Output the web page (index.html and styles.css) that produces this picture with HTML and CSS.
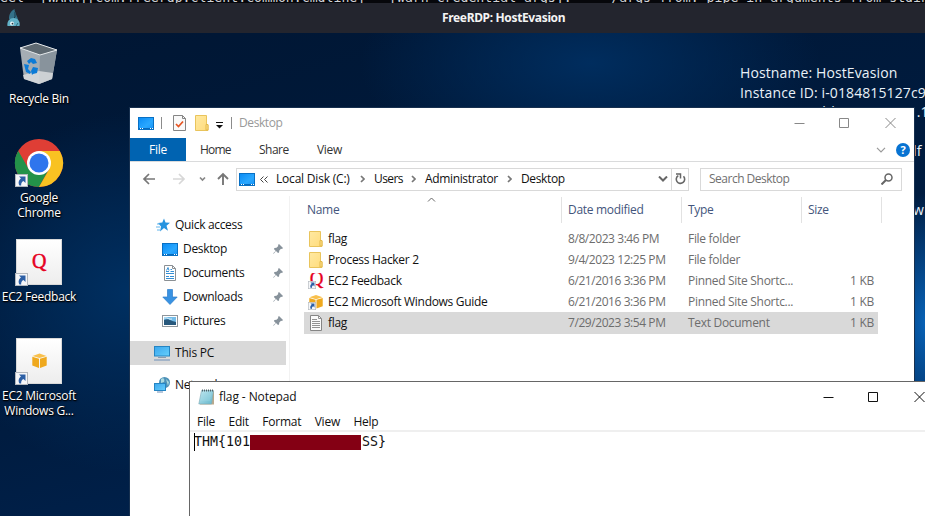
FILE: index.html
```html
<!DOCTYPE html>
<html lang="en">
<head>
<meta charset="utf-8">
<title>FreeRDP: HostEvasion</title>
<link rel="stylesheet" href="styles.css">
</head>
<body>
<svg class="defs" width="0" height="0" aria-hidden="true">
  <defs>
    <linearGradient id="blue" x2="1" y2="1"><stop stop-color="#0a8bf4"/><stop offset=".6" stop-color="#2aa8ff"/><stop offset="1" stop-color="#1792f5"/></linearGradient>
    <linearGradient id="screen" x2="1" y2="1"><stop stop-color="#3aa6ee"/><stop offset="1" stop-color="#66cffb"/></linearGradient>
    <linearGradient id="fold" x2="1" y2="1"><stop stop-color="#ffe9a2"/><stop offset="1" stop-color="#ffdc7c"/></linearGradient>
    <linearGradient id="tile" x2="0" y2="1"><stop stop-color="#fff"/><stop offset="1" stop-color="#ededed"/></linearGradient>
    <linearGradient id="pad" x2="1" y2="1"><stop stop-color="#c5eaf2"/><stop offset="1" stop-color="#62b6cb"/></linearGradient>
    <symbol id="desk" viewBox="0 0 16 13"><rect x=".5" y=".5" width="15" height="12" fill="url(#blue)" stroke="#0870c4"/><path d="M1 11.5h14" stroke="#076bbd"/><path d="M2 11.5h1M4 11.5h1M12 11.5h1M14 11.5h1" stroke="#fff"/></symbol>
    <symbol id="folder" viewBox="0 0 14 16"><path d="M.5.5h11v9.500h1.500v5.500H.5z" fill="url(#fold)" stroke="#e9c45c"/><path d="M11 15V9.500h2V15z" fill="#ffe08a" stroke="#e3b94a"/></symbol>
    <symbol id="pin" viewBox="0 0 10 10"><path d="M6 0l4 4-1 1-1-.3L6.300 6.500 6 8.500l-1 .6-2-2L.7 9.800.2 9.300 2.700 6.900.9 5l.6-1 2-.2L5.300 2 5 1z" fill="#87929b"/></symbol>
    <symbol id="short" viewBox="0 0 13 13"><rect x=".5" y=".5" width="12" height="12" fill="#f5f6f8" stroke="#b2b7bd"/><path d="M4 2.500h6.500V9L8.500 7C6.500 8 6 9.500 6.200 11.500H4.500C2.700 8.500 4 6 6 4.500z" fill="#2c5fa5"/></symbol>
    <symbol id="box" viewBox="0 0 15 15"><path d="M.5 3L7.500.5l7 2.500-7 2z" fill="#f9c04c"/><path d="M.3 3.700L7 5.700V15L.3 12.500zM8 5.700l6.700-2v8.800L8 15z" fill="#efa91e"/></symbol>
    <symbol id="sep" viewBox="0 0 5 8"><path d="M1 1l3 3-3 3" fill="none" stroke="#777" stroke-width="1.700"/></symbol>
  </defs>
</svg>

<div class="screen">
  <div class="terminal"><span>eel&nbsp; [WARN][com.freerdp.client.common.cmdline] - [warn_credential_args]:&nbsp;&nbsp; - /args-from: pipe in arguments from stdin</span></div>
  <header class="rdp-bar">
    <svg class="rdp-logo" width="13" height="18" viewBox="0 0 13 18"><path d="M7.500 0C4.500 1.500 1.800 5 2 10l9 1C11 8 8.500 6 9 4c-1-1-1.500-2-1.500-4z" fill="#34728a"/><path d="M8 3v5l-1 1" stroke="#17394b" fill="none"/><path d="M.5 17c-.8-4 1.500-8 6-8s7 4 6 8z" fill="#62b2c8"/><circle cx="5" cy="14.500" r="2" fill="#e9f5f8"/><circle cx="5.500" cy="14.700" r=".9" fill="#203944"/><path d="M9 17l2-3" stroke="#2b6c80"/></svg>
    <span class="rdp-title">FreeRDP: HostEvasion</span>
  </header>

  <main class="desktop">
    <div class="icons">
      <div class="shortcut bin">
        <svg width="40" height="44" viewBox="0 0 40 44"><path d="M1 6L17 1l21 7-5 29-13 5L5 37z" fill="#a5adb4"/><path d="M1 6L17 1l21 7-17 5z" fill="#5e6971"/><path d="M21 13L38 8l-5 29-13 5z" fill="#88939c"/><path d="M4 33l16-4 14 2-1 6-13 5-15-5z" fill="#d9dcde" opacity=".85"/><path d="M1 6L17 1l21 7-17 5z" fill="none" stroke="#e3e7e9"/><g fill="#0d7bd6"><path d="M8 19l4-3 4 1 2 4-4 1-2-2-2 2z"/><path d="M5 22l5 1-1 4 3 3-1 2-4-2z"/><path d="M13 27l1-2 5 1-1 5-4 1-1 1-1-4z"/></g></svg>
        <span>Recycle Bin</span>
      </div>
      <div class="shortcut chrome">
        <svg width="50" height="50" viewBox="0 0 50 50"><circle cx="25" cy="25" r="24" fill="#df3e35"/><path d="M4.200 13A24 24 0 0 0 25 49l10-18H14.600z" fill="#239249"/><path d="M25 13h20.800A24 24 0 0 1 25 49l10.400-18z" fill="#f9c222"/><path d="M4.200 13l10.400 18L25 25V13z" fill="#df3e35"/><path d="M4.200 13A24 24 0 0 0 2 31h12.600z" fill="#239249"/><circle cx="25" cy="25" r="12" fill="#fff"/><circle cx="25" cy="25" r="9.500" fill="#2f75ed"/><use href="#short" x="1" y="36" width="13" height="13"/></svg>
        <span>Google<br>Chrome</span>
      </div>
      <div class="shortcut feedback">
        <svg width="48" height="48" viewBox="0 0 48 48"><rect x="1.500" y="1.500" width="45" height="45" fill="url(#tile)" stroke="#d9d9d9"/><text class="q-large" x="24" y="29.500" text-anchor="middle">Q</text><use href="#short" y="35" width="13" height="13"/></svg>
        <span>EC2 Feedback</span>
      </div>
      <div class="shortcut guide">
        <svg width="48" height="48" viewBox="0 0 48 48"><rect x="1.500" y="1.500" width="45" height="45" fill="url(#tile)" stroke="#d9d9d9"/><use href="#box" x="17" y="16" width="15" height="15"/><use href="#short" y="35" width="13" height="13"/></svg>
        <span>EC2 Microsoft<br>Windows G...</span>
      </div>
    </div>

    <div class="host-info">
      <p>Hostname: HostEvasion</p>
      <p>Instance ID: i-0184815127c9</p>
      <p class="address">Private IP Address: 10.201.1</p>
      <p></p>
      <p class="edge">lf</p>
      <p></p>
      <p></p>
      <p class="edge">w</p>
    </div>

    <section class="explorer">
      <div class="titlebar">
        <svg class="t-desk" width="16" height="13"><use href="#desk"/></svg>
        <i class="rule"></i>
        <svg class="t-check" width="13" height="16" viewBox="0 0 13 16"><path d="M.5.5h9l3 3v12H.5z" fill="#f9f9f9" stroke="#858585"/><path d="M9.500.5v3h3" fill="none" stroke="#858585"/><path d="M3 9l2.500 2.500L10 6.500" fill="none" stroke="#e65422" stroke-width="1.700"/></svg>
        <svg class="t-folder" width="14" height="16"><use href="#folder"/></svg>
        <svg class="t-more" width="7" height="7" viewBox="0 0 7 7"><path d="M0 .5h7" stroke="#111"/><path d="M0 3h7L3.500 6.500z" fill="#111"/></svg>
        <i class="rule"></i>
        <span class="t-name">Desktop</span>
        <svg class="controls" width="104" height="12" viewBox="0 0 104 12"><path d="M.5 6.500h10M45.500 1.500h9v9h-9zM91.500 1l10 10m0-10l-10 10" fill="none" stroke="#888"/></svg>
      </div>
      <div class="ribbon">
        <span class="file">File</span><span class="home">Home</span><span class="share">Share</span><span class="view">View</span>
        <svg class="expand" width="10" height="6" viewBox="0 0 10 6"><path d="M1 .8l4 4 4-4" fill="none" stroke="#999" stroke-width="1.200"/></svg>
        <b class="help">?</b>
      </div>
      <div class="navigation">
        <svg class="arrows" width="90" height="14" viewBox="0 0 90 14"><path d="M13 7H2M7 2L2 7l5 5" fill="none" stroke="#777" stroke-width="1.700"/><path d="M31 7h11M37 2l5 5-5 5" fill="none" stroke="#d7d7d7" stroke-width="1.700"/><path d="M58 5.500l2.500 2.500L63 5.500" fill="none" stroke="#888" stroke-width="1.700"/><path d="M81 13V2M76 7l5-5 5 5" fill="none" stroke="#777" stroke-width="1.900"/></svg>
        <div class="path">
          <svg width="16" height="13"><use href="#desk"/></svg>
          <svg class="dbl" width="8" height="7" viewBox="0 0 8 7"><path d="M3.500.5l-3 3 3 3M7.500.5l-3 3 3 3" fill="none" stroke="#444"/></svg>
          <span class="p1">Local Disk (C:)</span><svg class="sep" width="5" height="8"><use href="#sep"/></svg><span class="p2">Users</span><svg class="sep" width="5" height="8"><use href="#sep"/></svg><span class="p3">Administrator</span><svg class="sep" width="5" height="8"><use href="#sep"/></svg><span class="p4">Desktop</span>
          <svg class="drop" width="10" height="6" viewBox="0 0 10 6"><path d="M1 .5l4 4 4-4" fill="none" stroke="#666" stroke-width="2"/></svg>
          <div class="reload"><svg width="11" height="12" viewBox="0 0 11 12"><path d="M3.300 2.600A4.200 4.200 0 1 0 8.500 3.300" fill="none" stroke="#666" stroke-width="1.600"/><path d="M1 1h4.500v4.500" fill="none" stroke="#666" stroke-width="1.500"/></svg></div>
        </div>
        <div class="search"><span>Search Desktop</span><svg width="12" height="12" viewBox="0 0 12 12"><circle cx="7.500" cy="4.500" r="3.500" fill="none" stroke="#666" stroke-width="1.500"/><path d="M5 7l-4.500 4.500" stroke="#666" stroke-width="2"/></svg></div>
      </div>
      <div class="content">
        <nav class="tree">
          <div class="node top"><svg width="14" height="14" viewBox="0 0 14 14"><path d="M8 .5l1.500 4 4.500.2-3.500 3 1.500 5L8 10l-4 3.500 1-5-3-3.500 4.300-.4z" fill="#2693df"/><path d="M1 6h3M0 9h4M1 12h3" stroke="#64b6ec"/></svg><span>Quick access</span></div>
          <div class="node"><svg width="16" height="13"><use href="#desk"/></svg><span>Desktop</span><svg class="pin" width="10" height="10"><use href="#pin"/></svg></div>
          <div class="node"><svg width="16" height="16" viewBox="0 0 16 16"><path d="M2.500.5h8l3 3v12h-11z" fill="#fff" stroke="#8b9094"/><path d="M10.500.5v3h3" fill="none" stroke="#8b9094"/><path d="M4 6.500h3M8.500 4.500H10M8.500 6.500H12M4 8.500h8M4 11.500h3M8 11.500h4M4 13.500h8" stroke="#368fd4"/><path d="M4.500 5.500l1.500-3 1 3" fill="none" stroke="#368fd4"/></svg><span>Documents</span><svg class="pin" width="10" height="10"><use href="#pin"/></svg></div>
          <div class="node"><svg width="16" height="16" viewBox="0 0 16 16"><path d="M5.500.5h5V8h4.700L8 15.500.8 8h4.700z" fill="#3892e2" stroke="#2c7dca" stroke-width=".7"/></svg><span>Downloads</span><svg class="pin" width="10" height="10"><use href="#pin"/></svg></div>
          <div class="node"><svg width="16" height="12" viewBox="0 0 16 12"><rect x=".5" y=".5" width="15" height="11" fill="#fff" stroke="#8f969c"/><path d="M2 2h12v8H2z" fill="#75bde9"/><path d="M2 5c5-2 6 1 12 2v3H2z" fill="#28587c"/><path d="M2 3c4-1 5 2 8 1" stroke="#d9f1fc" fill="none"/></svg><span>Pictures</span><svg class="pin" width="10" height="10"><use href="#pin"/></svg></div>
          <div class="node top pc"><svg width="16" height="16" viewBox="0 0 16 16"><rect x=".5" y="1.500" width="15" height="9.500" fill="url(#screen)" stroke="#2585c3"/><path d="M4 12.500h8" stroke="#8c9caf"/><path d="M0 15h16" stroke="#6f8fb8"/></svg><span>This PC</span></div>
          <div class="node top net"><svg width="16" height="16" viewBox="0 0 16 16"><circle cx="10.500" cy="5.500" r="5.500" fill="#4c91b8"/><path d="M7 2c3-2 4 1 3 3L7 6zM12 2l3 3-1 4z" fill="#abd9df"/><rect x=".5" y="6.500" width="11" height="7" fill="url(#screen)" stroke="#2585c3"/><path d="M3 15h6" stroke="#6f8fb8"/></svg><span>Network</span></div>
        </nav>
        <div class="files">
          <svg class="sort" width="9" height="5" viewBox="0 0 9 5"><path d="M1 4.500L4.500 1 8 4.500" fill="none" stroke="#666"/></svg>
          <div class="head"><span>Name</span><span>Date modified</span><span>Type</span><span>Size</span></div>
          <div class="row"><span class="name"><svg width="14" height="16"><use href="#folder"/></svg>flag</span><span class="date">8/8/2023 3:46 PM</span><span>File folder</span><span></span></div>
          <div class="row"><span class="name"><svg width="14" height="16"><use href="#folder"/></svg>Process Hacker 2</span><span class="date">9/4/2023 12:25 PM</span><span>File folder</span><span></span></div>
          <div class="row"><span class="name"><svg width="16" height="16" viewBox="0 0 16 16"><text class="q-small" x="8.500" y="12" text-anchor="middle">Q</text><use href="#short" y="8" width="8" height="8"/></svg>EC2 Feedback</span><span class="date">6/21/2016 3:36 PM</span><span>Pinned Site Shortc...</span><span class="size">1 KB</span></div>
          <div class="row"><span class="name"><svg width="16" height="16" viewBox="0 0 16 16"><use href="#box" x="1" width="14" height="15"/><use href="#short" y="8" width="8" height="8"/></svg>EC2 Microsoft Windows Guide</span><span class="date">6/21/2016 3:36 PM</span><span>Pinned Site Shortc...</span><span class="size">1 KB</span></div>
          <div class="row selected"><span class="name"><svg width="14" height="16" viewBox="0 0 14 16"><path d="M1.500.5h8l3 3v12h-11z" fill="#fafafa" stroke="#858585"/><path d="M9.500.5v3h3M3 4.500h5M3 6.500h8M3 8.500h8M3 10.500h8M3 12.500h8" fill="none" stroke="#929292"/></svg>flag</span><span class="date">7/29/2023 3:54 PM</span><span>Text Document</span><span class="size">1 KB</span></div>
        </div>
      </div>
    </section>

    <section class="notepad">
      <div class="note-title">
        <svg width="17" height="17" viewBox="0 0 17 17"><path d="M4 2h12v13.500H2z" fill="#b9a98c"/><path d="M3.500 1.500h12L13.500 15H.8z" fill="url(#pad)" stroke="#7faab5" stroke-width=".6"/><path d="M3 5h10M3 7h10M2.500 9h10M2 11h10" stroke="#a6dae5" stroke-width=".6"/><path d="M4 1.500h11" stroke="#4d6269" stroke-width="2" stroke-dasharray="1 1"/></svg>
        <span>flag - Notepad</span>
        <svg class="note-controls" width="104" height="12" viewBox="0 0 104 12"><path d="M.5 6.500h10M45.500 1.500h9v9h-9zM91.500 1l10 10m0-10l-10 10" fill="none" stroke="#111"/></svg>
      </div>
      <div class="menu"><span>File</span><span>Edit</span><span>Format</span><span>View</span><span>Help</span></div>
      <div class="text"><i class="caret"></i><span>THM{101</span><i class="redaction"></i><span>SS}</span></div>
    </section>
  </main>
</div>
</body>
</html>
```
FILE: styles.css
```css
* { box-sizing: border-box; }
body { margin: 0; overflow: hidden; background: #001a3b; font: 12px/16px "Open Sans", "Noto Sans", sans-serif; letter-spacing: -.2px; color: #111; }
svg { display: block; flex: none; }
span { white-space: nowrap; }
.defs { position: absolute; }
.screen { width: 925px; height: 516px; display: flex; flex-direction: column; overflow: hidden; }
.terminal { height: 3px; flex: none; background: #06070b; color: #d0d2d6; overflow: hidden; font: 13.2px/16px "DejaVu Sans Mono", monospace; letter-spacing: 0; display: flex; align-items: flex-end; }
.terminal span { margin-bottom: -3px; }
.rdp-bar { height: 30px; flex: none; background: #23252e; display: flex; align-items: center; padding-left: 7px; color: #f4f4f4; }
.rdp-title { margin-left: 422px; font: 700 12px/16px "Noto Sans", sans-serif; letter-spacing: -.35px; }
.desktop { position: relative; flex: 1; overflow: hidden; background: radial-gradient(ellipse 45px 130px at 925px 290px, #0862b6, transparent), radial-gradient(ellipse 230px 110px at 590px 30px, #002d5e, transparent), radial-gradient(ellipse 190px 180px at 130px 260px, #003062, transparent), linear-gradient(165deg, #001633, #001c40 55%, #00275a); }
.icons { width: 78px; display: flex; flex-direction: column; color: #fff; }
.shortcut { display: flex; flex-direction: column; align-items: center; text-align: center; line-height: 15px; }
.shortcut span { text-shadow: 1px 1px 2px #000, 0 1px 1px #000; letter-spacing: -.25px; }
.bin { height: 104px; padding-top: 9px; }
.bin svg { margin-bottom: 5px; }
.chrome { height: 101px; }
.chrome svg { margin: 1px 0 2px; }
.feedback { height: 99px; }
.feedback svg, .guide svg { margin-bottom: 3px; }
.q-large { font: 20px "Liberation Serif", serif; fill: #e6001e; stroke: #e6001e; stroke-width: .5px; }
.q-small { font: 19px "Liberation Serif", serif; fill: #e6001e; stroke: #e6001e; stroke-width: .3px; }
.host-info { position: absolute; left: 740px; top: 30px; width: 185px; overflow: hidden; color: #e9f1f8; font: 14px/19.500px "Open Sans", sans-serif; letter-spacing: .11px; white-space: nowrap; }
.host-info p { margin: 0; height: 19.500px; }
.host-info .address { letter-spacing: .3px; }
.host-info .edge { padding-left: 173px; }
.explorer { position: absolute; left: 130px; top: 75px; width: 784px; height: 408px; background: #fff; box-shadow: 0 0 0 1px #17304f; }
.titlebar { height: 30px; display: flex; align-items: center; padding-left: 8px; color: #999; }
.rule { width: 1px; height: 12px; background: #8b8b8b; }
.t-desk { margin-right: 7px; }
.t-check { margin-left: 11px; }
.t-folder { margin-left: 9px; }
.t-more { margin: 4px 8px 0 7px; }
.t-name { margin-left: 7px; letter-spacing: -.4px; }
.controls { margin-left: auto; margin-right: 16px; }
.ribbon { height: 24px; display: flex; align-items: center; border-bottom: 1px solid #dadbdc; color: #333; letter-spacing: -.3px; }
.file { width: 56px; height: 23px; line-height: 23px; text-align: center; background: #0063b1; color: #fff; }
.home { margin-left: 14px; width: 59px; letter-spacing: -.8px; }
.share { width: 58px; letter-spacing: -.5px; }
.expand { margin-left: auto; margin-right: 10px; }
.help { width: 14px; height: 14px; margin-right: 4px; border-radius: 50%; background: #0873d2; color: #fff; font-size: 11px; line-height: 14px; text-align: center; }
.navigation { height: 34px; display: flex; align-items: center; padding-left: 12px; }
.path { width: 453px; height: 23px; margin-left: 4px; border: 1px solid #d9d9d9; display: flex; align-items: center; padding-left: 2px; letter-spacing: -.35px; }
.dbl { margin: 0 8px 0 5px; }
.p1 { width: 75px; letter-spacing: -.2px; }
.sep { margin: 0 9px; }
.p2 { width: 28px; letter-spacing: -.6px; }
.p3 { width: 73px; }
.drop { margin-left: auto; margin-right: 3px; }
.reload { width: 17px; height: 21px; border-left: 1px solid #d9d9d9; display: flex; align-items: center; justify-content: center; }
.search { width: 202px; height: 23px; border: 1px solid #d9d9d9; margin-left: 11px; display: flex; align-items: center; justify-content: space-between; padding: 0 8px; color: #707070; letter-spacing: -.5px; }
.content { display: flex; height: 320px; }
.tree { width: 160px; padding-top: 17px; border-right: 1px solid #f2f2f2; letter-spacing: -.33px; }
.node { width: 156px; height: 24px; display: flex; align-items: center; padding-left: 32px; padding-right: 3px; }
.node span { margin-left: 5px; }
.node .pin { margin-left: auto; margin-right: 0; }
.node.top { padding-left: 26px; }
.node.pc { padding-left: 24px; margin: 8px 0; background: #d9d9d9; letter-spacing: -.2px; }
.node.net { padding-left: 24px; }
.files { position: relative; width: 624px; }
.sort { position: absolute; left: 137px; top: 1px; }
.head { display: grid; grid-template-columns: 258px 120px 120px 80px; height: 26px; margin: 1px 0 5px 14px; color: #43557c; letter-spacing: -.3px; }
.head span { border-right: 1px solid #e2e2e2; padding-left: 6px; line-height: 26px; }
.head span:first-child { padding-left: 3px; }
.row { width: 574px; height: 21px; margin-left: 14px; display: grid; grid-template-columns: 264px 120px 120px 70px; align-items: center; color: #6d6d6d; letter-spacing: -.3px; }
.selected { height: 22px; background: #d9d9d9; }
.name { display: flex; align-items: center; padding-left: 5px; color: #111; }
.name svg { width: 16px; margin-right: 4px; margin-left: -1px; }
.name svg[width="14"] { width: 14px; margin: 0 5px 0 0; }
.date { letter-spacing: -.43px; }
.size { text-align: right; padding-right: 4px; }
.notepad { position: absolute; left: 189px; top: 348px; width: 760px; height: 160px; background: #fff; border: 1px solid #666; }
.note-title { height: 30px; display: flex; align-items: center; padding-left: 8px; letter-spacing: -.1px; }
.note-title span { width: 78px; margin-left: 4px; }
.note-controls { margin-left: 526px; }
.menu { height: 20px; display: flex; align-items: center; gap: 13.500px; padding: 2px 0 0 7px; border-bottom: 2px solid #efefef; letter-spacing: -.25px; }
.text { height: 20px; display: flex; align-items: center; padding-left: 4px; font: 13.300px/16px "DejaVu Sans Mono", monospace; letter-spacing: -.02px; }
.caret { width: 1px; height: 18px; margin-right: -1px; background: #000; }
.redaction { width: 111px; height: 15px; margin: 1px 1px 0 0; background: #840014; }
```
